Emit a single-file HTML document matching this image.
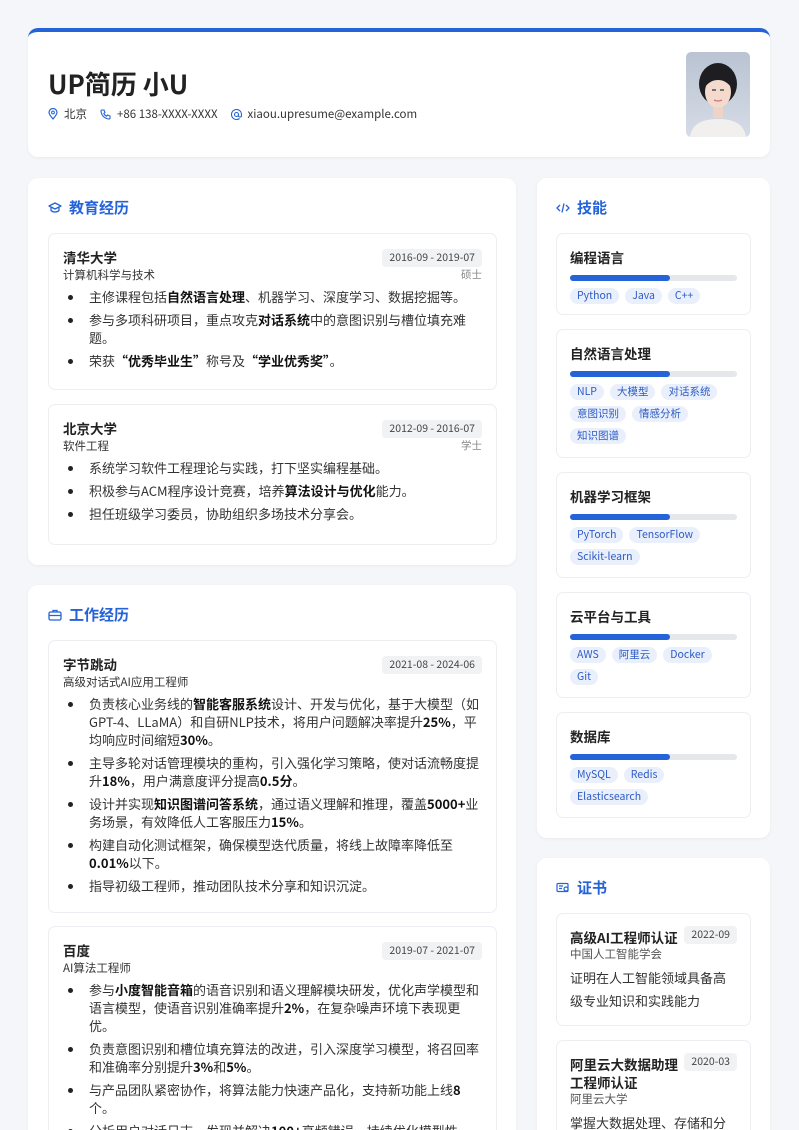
<!DOCTYPE html>
<html><head><meta charset="utf-8"><style>
*{box-sizing:border-box;margin:0;padding:0}
html,body{width:799px;height:1130px;overflow:hidden}
body{background:#f4f6f9;font-family:"Noto Sans CJK SC","Liberation Sans",sans-serif;color:#222;position:relative}
.card{position:absolute;background:#fff;border-radius:10px;box-shadow:0 1px 3px rgba(0,0,0,.05);overflow:hidden}
.hdr{left:28px;top:28px;width:742px;height:129px;border-top:4px solid #2563d9}
.name{position:absolute;left:20px;top:34px;font-size:26px;line-height:36px;font-weight:700;color:#222}
.contact{position:absolute;left:20px;top:73px;font-size:11.5px;line-height:18px;color:#333;display:flex;gap:13px;align-items:center}
.contact span{display:flex;align-items:center;gap:6px}
.photo{position:absolute;left:658px;top:20px;width:64px;height:85px;border-radius:5px;overflow:hidden}
.sec-t{position:absolute;left:20px;font-size:15px;line-height:20px;font-weight:700;color:#2563d9;display:flex;align-items:center;gap:7px}
.item{position:absolute;left:20px;width:449px;border:1px solid #eceef1;border-radius:7px;padding:13px 14px 12px}
.it-h{display:flex;justify-content:space-between;align-items:flex-start}
.it-n{font-size:13.5px;line-height:20px;font-weight:700}
.date{background:#f1f2f4;border-radius:4px;font-size:10.5px;line-height:14px;color:#444;padding:2px 7px;white-space:nowrap;margin-top:2px}
.sub{font-size:11.5px;line-height:16px;color:#333;display:flex;justify-content:space-between}
.sub i{font-style:normal;color:#888;font-size:10.5px}
ul{list-style:none;margin-top:5px}
li{position:relative;padding-left:26px;font-size:13px;line-height:18px;margin-bottom:5px;color:#333}
li:before{content:"";position:absolute;left:5px;top:7px;width:5px;height:5px;border-radius:50%;background:#222}
b{color:#111}
.sk{position:absolute;left:19px;width:195px;border:1px solid #eceef1;border-radius:7px;padding:13px 13px 10px}
.sk-t{font-size:13.5px;line-height:20px;font-weight:700}
.bar{height:6px;background:#e5e7eb;border-radius:3px;margin:8px 0 7px}
.bar div{width:60%;height:100%;background:#2563d9;border-radius:3px}
.tags{display:flex;flex-wrap:wrap;gap:6px}
.tag{background:#e9effb;color:#2d5bc4;font-size:10.5px;border-radius:8px;padding:0 7px;line-height:16px}
.ce{position:absolute;left:19px;width:195px;border:1px solid #eceef1;border-radius:7px;padding:10px 13px}
.ce-n{font-size:13.5px;font-weight:700;line-height:18px}
.ce-o{font-size:11.5px;line-height:16px;color:#555;margin-top:0}
.ce-d{font-size:13px;color:#333;line-height:23px;margin-top:4px}
</style></head><body>
<div class="card hdr">
<div class="name">UP简历 小U</div>
<div class="contact">
<span><svg width="10" height="12" viewBox="0 0 10 12"><path d="M5 11C2 7.5 1 6 1 4.5a4 4 0 018 0C9 6 8 7.5 5 11z" fill="none" stroke="#2563d9" stroke-width="1.2"/><circle cx="5" cy="4.5" r="1.4" fill="none" stroke="#2563d9"/></svg>北京</span>
<span><svg width="11" height="11" viewBox="0 0 11 11"><path d="M2 1l2 0 1 2.5-1.2 1a6 6 0 002.7 2.7l1-1.2L10 7v2a1 1 0 01-1 1A8.5 8.5 0 011 2a1 1 0 011-1z" fill="none" stroke="#2563d9" stroke-width="1.1"/></svg>+86 138-XXXX-XXXX</span>
<span><svg width="11" height="11" viewBox="0 0 11 11"><circle cx="5.5" cy="5.5" r="2" fill="none" stroke="#2563d9" stroke-width="1.1"/><path d="M7.5 5.5v1a1.5 1.5 0 003 0v-1a5 5 0 10-2 4" fill="none" stroke="#2563d9" stroke-width="1.1"/></svg>xiaou.upresume@example.com</span>
</div>
<div class="photo"><svg width="64" height="85" viewBox="0 0 64 85"><defs><linearGradient id="g" x1="0" y1="0" x2="0" y2="1"><stop offset="0" stop-color="#b9c3d2"/><stop offset="1" stop-color="#d6dce6"/></linearGradient></defs><rect width="64" height="85" fill="url(#g)"/><ellipse cx="32" cy="32" rx="19" ry="21" fill="#1e1e22"/><path d="M4 85c2-14 14-18 28-18s26 4 28 18z" fill="#f2f0ee"/><rect x="27" y="52" width="10" height="14" fill="#efd3c5"/><ellipse cx="32" cy="40" rx="13" ry="16" fill="#f3dacd"/><path d="M19 35c2-10 8-13 13-13s11 3 13 13c-4-5-8-7-13-7s-9 2-13 7z" fill="#1e1e22"/><path d="M26 38h4M34 38h4" stroke="#333" stroke-width="1.2"/><path d="M28 48q4 2 8 0" stroke="#c77" stroke-width="1.3" fill="none"/></svg></div>
</div>

<div class="card" style="left:28px;top:178px;width:488px;height:387px">
<div class="sec-t" style="top:20px"><svg width="14" height="12" viewBox="0 0 14 12"><path d="M7 1L1 4l6 3 6-3zM3 5v3.5c2 2 6 2 8 0V5" fill="none" stroke="#2563d9" stroke-width="1.3" stroke-linejoin="round"/></svg>教育经历</div>
<div class="item" style="top:55px;height:157px">
<div class="it-h"><div class="it-n">清华大学</div><div class="date">2016-09 - 2019-07</div></div>
<div class="sub"><span>计算机科学与技术</span><i>硕士</i></div>
<ul><li>主修课程包括<b>自然语言处理</b>、机器学习、深度学习、数据挖掘等。</li>
<li>参与多项科研项目，重点攻克<b>对话系统</b>中的意图识别与槽位填充难题。</li>
<li>荣获<b>“优秀毕业生”</b>称号及<b>“学业优秀奖”</b>。</li></ul>
</div>
<div class="item" style="top:226px;height:141px">
<div class="it-h"><div class="it-n">北京大学</div><div class="date">2012-09 - 2016-07</div></div>
<div class="sub"><span>软件工程</span><i>学士</i></div>
<ul><li>系统学习软件工程理论与实践，打下坚实编程基础。</li>
<li>积极参与ACM程序设计竞赛，培养<b>算法设计与优化</b>能力。</li>
<li>担任班级学习委员，协助组织多场技术分享会。</li></ul>
</div>
</div>

<div class="card" style="left:28px;top:585px;width:488px;height:560px">
<div class="sec-t" style="top:20px"><svg width="14" height="12" viewBox="0 0 14 12"><rect x="1" y="3" width="12" height="8" rx="1.5" fill="none" stroke="#2563d9" stroke-width="1.3"/><path d="M5 3V1.5h4V3M1 6.5h12" fill="none" stroke="#2563d9" stroke-width="1.3"/></svg>工作经历</div>
<div class="item" style="top:55px;height:273px">
<div class="it-h"><div class="it-n">字节跳动</div><div class="date">2021-08 - 2024-06</div></div>
<div class="sub"><span>高级对话式AI应用工程师</span></div>
<ul><li>负责核心业务线的<b>智能客服系统</b>设计、开发与优化，基于大模型（如GPT-4、LLaMA）和自研NLP技术，将用户问题解决率提升<b>25%</b>，平均响应时间缩短<b>30%</b>。</li>
<li>主导多轮对话管理模块的重构，引入强化学习策略，使对话流畅度提升<b>18%</b>，用户满意度评分提高<b>0.5分</b>。</li>
<li>设计并实现<b>知识图谱问答系统</b>，通过语义理解和推理，覆盖<b>5000+</b>业务场景，有效降低人工客服压力<b>15%</b>。</li>
<li>构建自动化测试框架，确保模型迭代质量，将线上故障率降低至<b>0.01%</b>以下。</li>
<li>指导初级工程师，推动团队技术分享和知识沉淀。</li></ul>
</div>
<div class="item" style="top:341px;height:250px">
<div class="it-h"><div class="it-n">百度</div><div class="date">2019-07 - 2021-07</div></div>
<div class="sub"><span>AI算法工程师</span></div>
<ul><li>参与<b>小度智能音箱</b>的语音识别和语义理解模块研发，优化声学模型和语言模型，使语音识别准确率提升<b>2%</b>，在复杂噪声环境下表现更优。</li>
<li>负责意图识别和槽位填充算法的改进，引入深度学习模型，将召回率和准确率分别提升<b>3%</b>和<b>5%</b>。</li>
<li>与产品团队紧密协作，将算法能力快速产品化，支持新功能上线<b>8</b>个。</li>
<li>分析用户对话日志，发现并解决<b>100+</b>高频错误，持续优化模型性能。</li></ul>
</div>
</div>

<div class="card" style="left:537px;top:178px;width:233px;height:660px">
<div class="sec-t" style="top:20px;left:19px"><svg width="14" height="12" viewBox="0 0 14 12"><path d="M4 3L1 6l3 3M10 3l3 3-3 3M8 1.5L6 10.5" fill="none" stroke="#2563d9" stroke-width="1.3"/></svg>技能</div>
<div class="sk" style="top:55px;height:82px"><div class="sk-t">编程语言</div><div class="bar"><div></div></div><div class="tags"><span class="tag">Python</span><span class="tag">Java</span><span class="tag">C++</span></div></div>
<div class="sk" style="top:151px;height:129px"><div class="sk-t">自然语言处理</div><div class="bar"><div></div></div><div class="tags"><span class="tag">NLP</span><span class="tag">大模型</span><span class="tag">对话系统</span><span class="tag">意图识别</span><span class="tag">情感分析</span><span class="tag">知识图谱</span></div></div>
<div class="sk" style="top:294px;height:106px"><div class="sk-t">机器学习框架</div><div class="bar"><div></div></div><div class="tags"><span class="tag">PyTorch</span><span class="tag">TensorFlow</span><span class="tag">Scikit-learn</span></div></div>
<div class="sk" style="top:414px;height:106px"><div class="sk-t">云平台与工具</div><div class="bar"><div></div></div><div class="tags"><span class="tag">AWS</span><span class="tag">阿里云</span><span class="tag">Docker</span><span class="tag">Git</span></div></div>
<div class="sk" style="top:534px;height:106px"><div class="sk-t">数据库</div><div class="bar"><div></div></div><div class="tags"><span class="tag">MySQL</span><span class="tag">Redis</span><span class="tag">Elasticsearch</span></div></div>
</div>

<div class="card" style="left:537px;top:858px;width:233px;height:300px">
<div class="sec-t" style="top:20px;left:19px"><svg width="14" height="12" viewBox="0 0 14 12"><rect x="1" y="1.5" width="11" height="8" rx="1" fill="none" stroke="#2563d9" stroke-width="1.2"/><path d="M3 4h4M3 6.5h3" stroke="#2563d9" stroke-width="1.2"/><circle cx="10" cy="7" r="2" fill="#fff" stroke="#2563d9" stroke-width="1.2"/></svg>证书</div>
<div class="ce" style="top:55px;height:113px"><div style="display:flex;justify-content:space-between;align-items:flex-start"><div class="ce-n" style="margin-top:4px">高级AI工程师认证</div><div class="date">2022-09</div></div><div class="ce-o">中国人工智能学会</div><div class="ce-d">证明在人工智能领域具备高级专业知识和实践能力</div></div>
<div class="ce" style="top:182px;height:130px"><div style="display:flex;justify-content:space-between;align-items:flex-start"><div class="ce-n" style="margin-top:4px;width:120px">阿里云大数据助理工程师认证</div><div class="date">2020-03</div></div><div class="ce-o">阿里云大学</div><div class="ce-d">掌握大数据处理、存储和分析</div></div>
</div>
</body></html>
